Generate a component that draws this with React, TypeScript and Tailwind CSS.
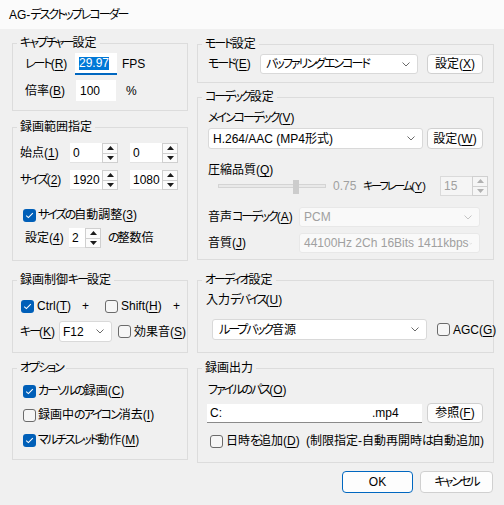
import React from "react";

const J = ({ s }: { s: string }) => (
  <>
    {s.split(/([\u3040-\u30ff]+)/).map((p, i) =>
      /[\u3040-\u30ff]/.test(p) ? (
        <span key={i} className="tracking-[-2px]">
          {p}
        </span>
      ) : (
        <React.Fragment key={i}>{p}</React.Fragment>
      )
    )}
  </>
);

const U = ({ t, k }: { t: string; k: string }) => (
  <span className="whitespace-nowrap">
    <J s={t} />(<span className="underline underline-offset-[2px] decoration-[1px]">{k}</span>)
  </span>
);

const Check = ({ on }: { on?: boolean }) =>
  on ? (
    <span className="w-[13px] h-[13px] rounded-[3px] bg-[#005fb8] flex items-center justify-center shrink-0">
      <svg width="9" height="7" viewBox="0 0 9 7">
        <path d="M1.2 3.6 L3.4 5.6 L7.8 1.2" stroke="white" strokeWidth="1.1" fill="none" />
      </svg>
    </span>
  ) : (
    <span className="w-[13px] h-[13px] rounded-[3px] border border-[#6b6b6b] bg-[#f6f6f6] shrink-0" />
  );

const Chevron = ({ c }: { c: string }) => (
  <svg width="8" height="5" viewBox="0 0 8 5">
    <path d="M0.5 0.5 L4 4 L7.5 0.5" stroke={c} strokeWidth="1" fill="none" />
  </svg>
);

const Combo = ({ className, text, disabled }: { className: string; text: string; disabled?: boolean }) => (
  <div
    className={
      "flex items-center justify-between rounded-[3px] border pr-[7px] shrink-0 " +
      (disabled ? "bg-[#f9f9f9] border-[#e8e8e8] text-[#a0a0a0] " : "bg-white border-[#d9d9d9] ") +
      className
    }
  >
    <span className="whitespace-nowrap">
      <J s={text} />
    </span>
    <Chevron c={disabled ? "#c4c4c4" : "#6a6a6a"} />
  </div>
);

const Btn = ({ className, children }: { className: string; children: React.ReactNode }) => (
  <div className={"flex items-center justify-center bg-[#fdfdfd] rounded-[4px] border shrink-0 " + className}>
    {children}
  </div>
);

const Tri = ({ up, c }: { up?: boolean; c: string }) => (
  <svg width="7" height="4" viewBox="0 0 7 4">
    <polygon points={up ? "0,4 3.5,0 7,4" : "0,0 3.5,4 7,0"} fill={c} />
  </svg>
);

const Spin = ({ v, iw, disabled }: { v: string; iw: string; disabled?: boolean }) => (
  <div className="flex h-[20px] shrink-0">
    <div
      className={
        "flex items-center pl-[3px] " +
        (disabled
          ? "bg-[#f5f5f5] border border-r-0 border-[#dadada] text-[#a0a0a0] "
          : "bg-white border-b border-[#e2e2e2] ") +
        iw
      }
    >
      {v}
    </div>
    <div className={"w-[16px] flex flex-col border " + (disabled ? "border-[#d0d0d0]" : "border-[#cfcfcf]")}>
      <div
        className={
          "flex-1 flex items-center justify-center border-b " +
          (disabled ? "border-[#d0d0d0] bg-[#f5f5f5]" : "border-[#cfcfcf] bg-[#fbfbfb]")
        }
      >
        <Tri up c={disabled ? "#b0b0b0" : "#1a1a1a"} />
      </div>
      <div className={"flex-1 flex items-center justify-center " + (disabled ? "bg-[#f5f5f5]" : "bg-[#fbfbfb]")}>
        <Tri c={disabled ? "#b0b0b0" : "#1a1a1a"} />
      </div>
    </div>
  </div>
);

const Group = ({ title, className, children }: { title: string; className: string; children?: React.ReactNode }) => (
  <div className={"relative border border-[#dcdcdc] shrink-0 " + className}>
    <span className="absolute left-[4px] top-[-8px] px-[3px] bg-[#f0f0f0] leading-[14px] whitespace-nowrap">
      <J s={title} />
    </span>
    {children}
  </div>
);

const Opt = ({ on, t, k, className }: { on?: boolean; t: string; k: string; className: string }) => (
  <div className={"flex items-center " + className}>
    <Check on={on} />
    <span className="ml-[2px]">
      <U t={t} k={k} />
    </span>
  </div>
);

export default function App() {
  return (
    <div className="w-[504px] h-[505px] bg-[#f0f0f0] text-black text-[12px] leading-[16px] font-['Liberation_Sans','Noto_Sans_CJK_JP',sans-serif] [font-feature-settings:'palt'] overflow-hidden">
      <div className="h-[29px] bg-[#fbfbfb] flex items-center pl-[9px]">
        <J s="AG-デスクトップレコーダー" />
      </div>

      <div className="pl-[12px] pr-[10px]">
        {/* Top section */}
        <div className="flex gap-[9px] items-start">
          <div className="w-[176px] mt-[14px] flex flex-col">
            <Group title="キャプチャー設定" className="h-[68px] pt-[9px] pl-[12px]">
              <div className="flex items-center h-[22px]">
                <span className="w-[50px]">
                  <U t="レート" k="R" />
                </span>
                <div className="w-[42px] h-[22px] bg-white border-b-2 border-[#0067c0] flex items-center pl-[4px]">
                  <span className="bg-[#0078d7] text-white leading-[13px]">29.97</span>
                </div>
                <span className="ml-[5px]">FPS</span>
              </div>
              <div className="flex items-center h-[21px] mt-[5px]">
                <span className="w-[51px]">
                  <U t="倍率" k="B" />
                </span>
                <div className="w-[40px] h-[21px] bg-white flex items-center pl-[4px]">100</div>
                <span className="ml-[10px]">%</span>
              </div>
            </Group>

            <Group title="録画範囲指定" className="mt-[16px] h-[134px] pt-[15px] pl-[7px]">
              <div className="flex items-center h-[20px]">
                <span className="w-[50px]">
                  <U t="始点" k="1" />
                </span>
                <Spin v="0" iw="w-[32px]" />
                <div className="ml-[12px]">
                  <Spin v="0" iw="w-[32px]" />
                </div>
              </div>
              <div className="flex items-center h-[20px] mt-[7px]">
                <span className="w-[50px]">
                  <U t="サイズ" k="2" />
                </span>
                <Spin v="1920" iw="w-[32px]" />
                <div className="ml-[12px]">
                  <Spin v="1080" iw="w-[32px]" />
                </div>
              </div>
              <Opt on t="サイズの自動調整" k="3" className="h-[16px] mt-[17px] ml-[3px]" />
              <div className="flex items-center h-[20px] mt-[5px] ml-[5px]">
                <span className="w-[44px]">
                  <U t="設定" k="4" />
                </span>
                <Spin v="2" iw="w-[16px]" />
                <span className="ml-[7px]">
                  <J s="の整数倍" />
                </span>
              </div>
            </Group>
          </div>

          <div className="w-[297px] mt-[15px] flex flex-col">
            <Group title="モード設定" className="h-[39px] pt-[9px] pl-[10px]">
              <div className="flex items-center h-[20px]">
                <span className="w-[52px]">
                  <U t="モード" k="E" />
                </span>
                <Combo className="w-[158px] h-[20px] pl-[5px]" text="バッファリングエンコード" />
                <Btn className="ml-[9px] w-[56px] h-[20px] border-[#d0d0d0]">
                  <U t="設定" k="X" />
                </Btn>
              </div>
            </Group>

            <Group title="コーデック設定" className="mt-[14px] h-[163px] pt-[12px] pl-[10px]">
              <div className="h-[16px] flex items-center">
                <U t="メインコーデック" k="V" />
              </div>
              <div className="flex items-center mt-[2px]">
                <Combo className="w-[215px] h-[21px] pl-[4px]" text="H.264/AAC (MP4形式)" />
                <Btn className="ml-[4px] w-[56px] h-[21px] border-[#d0d0d0]">
                  <U t="設定" k="W" />
                </Btn>
              </div>
              <div className="h-[14px] mt-[14px] flex items-center">
                <U t="圧縮品質" k="Q" />
              </div>
              <div className="flex items-center h-[20px] mt-[-1px]">
                <div className="ml-[10px] w-[108px] h-[20px] relative flex items-center">
                  <div className="w-full h-[4px] bg-[#e9e9e9] border border-[#d4d4d4]" />
                  <div className="absolute left-[75px] top-[4px] w-[6px] h-[14px] bg-[#cccccc]" />
                </div>
                <span className="ml-[7px] w-[30px] text-[#a0a0a0]">0.75</span>
                <span className="w-[77px] text-[11px]">
                  <U t="キーフレーム" k="Y" />
                </span>
                <Spin v="15" iw="w-[32px]" disabled />
              </div>
              <div className="flex items-center h-[20px] mt-[11px]">
                <span className="w-[91px]">
                  <U t="音声コーデック" k="A" />
                </span>
                <Combo className="w-[181px] h-[20px] pl-[4px]" text="PCM" disabled />
              </div>
              <div className="flex items-center h-[20px] mt-[6px]">
                <span className="w-[91px]">
                  <U t="音質" k="J" />
                </span>
                <Combo className="w-[181px] h-[20px] pl-[4px]" text="44100Hz 2Ch 16Bits 1411kbps" disabled />
              </div>
            </Group>
          </div>
        </div>

        {/* Middle row */}
        <div className="flex gap-[9px] mt-[19px]">
          <Group title="録画制御キー設定" className="w-[176px] h-[73px] pt-[15px] pl-[8px]">
            <div className="flex items-center h-[20px]">
              <div className="w-[61px] flex items-center">
                <Check on />
                <span className="ml-[3px]">
                  <U t="Ctrl" k="T" />
                </span>
              </div>
              <span className="w-[23px]">+</span>
              <div className="w-[68px] flex items-center">
                <Check />
                <span className="ml-[3px]">
                  <U t="Shift" k="H" />
                </span>
              </div>
              <span>+</span>
            </div>
            <div className="flex items-center h-[21px] mt-[5px] ml-[-1px]">
              <span className="w-[39px]">
                <U t="キー" k="K" />
              </span>
              <Combo className="w-[53px] h-[21px] pl-[3px]" text="F12" />
              <div className="ml-[6px] flex items-center">
                <Check />
                <span className="ml-[3px]">
                  <U t="効果音" k="S" />
                </span>
              </div>
            </div>
          </Group>

          <Group title="オーディオ設定" className="w-[297px] h-[73px] pt-[11px] pl-[8px]">
            <div className="h-[16px] flex items-center">
              <U t="入力デバイス" k="U" />
            </div>
            <div className="flex items-center mt-[11px]">
              <Combo className="ml-[6px] w-[215px] h-[21px] pl-[6px]" text="ループバック音源" />
              <div className="ml-[10px] flex items-center">
                <Check />
                <span className="ml-[3px]">
                  <U t="AGC" k="G" />
                </span>
              </div>
            </div>
          </Group>
        </div>

        {/* Bottom row */}
        <div className="flex gap-[9px] mt-[15px] items-start">
          <Group title="オプション" className="w-[176px] h-[92px] pt-[12px] pl-[10px]">
            <Opt on t="カーソルの録画" k="C" className="h-[20px]" />
            <Opt t="録画中のアイコン消去" k="I" className="h-[20px] mt-[4px]" />
            <Opt on t="マルチスレッド動作" k="M" className="h-[20px] mt-[5px]" />
          </Group>

          <Group title="録画出力" className="w-[297px] h-[95px] pt-[13px] pl-[10px]">
            <div className="h-[16px] flex items-center">
              <U t="ファイルのパス" k="O" />
            </div>
            <div className="flex items-center mt-[5px] ml-[-1px]">
              <div className="w-[215px] h-[19px] bg-white border-b border-[#8a8a8a] flex items-center pl-[3px]">
                <span className="w-[162px]">C:</span>
                <span>.mp4</span>
              </div>
              <Btn className="ml-[5px] w-[56px] h-[20px] border-[#d0d0d0]">
                <U t="参照" k="F" />
              </Btn>
            </div>
            <div className="flex items-center h-[20px] mt-[8px] ml-[2px]">
              <Check />
              <span className="ml-[3px] w-[80px]">
                <U t="日時を追加" k="D" />
              </span>
              <span className="whitespace-nowrap">
                <J s="(制限指定-自動再開時は自動追加)" />
              </span>
            </div>
          </Group>
        </div>

        {/* Buttons */}
        <div className="flex justify-end gap-[7px] mt-[8px] pr-[1px]">
          <Btn className="w-[71px] h-[22px] border-[#0067c0]">OK</Btn>
          <Btn className="w-[73px] h-[22px] border-[#d0d0d0]">
            <J s="キャンセル" />
          </Btn>
        </div>
      </div>
    </div>
  );
}
